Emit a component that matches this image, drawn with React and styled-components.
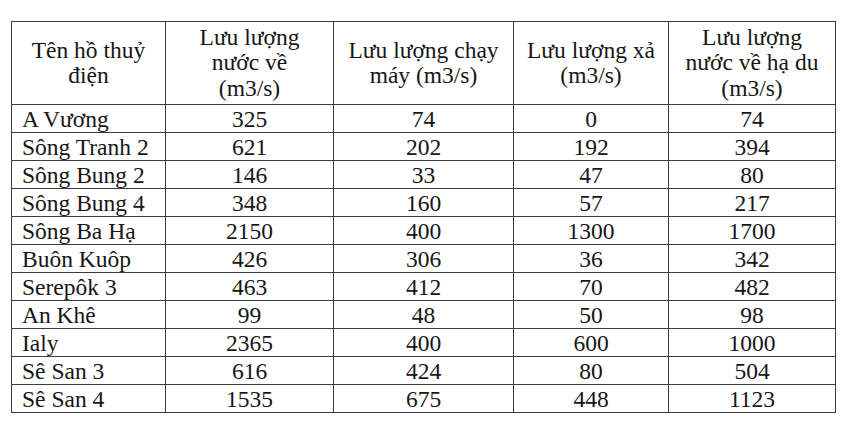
import React from 'react';
import styled, { createGlobalStyle } from 'styled-components';

const GlobalStyle = createGlobalStyle`
	html, body {
		margin: 0;
		padding: 0;
		background: #fff;
		font-family: "Liberation Serif", serif;
	}
`;

const Page = styled.div`
	padding: 21px 0 0 11px;
`;

const Table = styled.table`
	border-collapse: collapse;
	table-layout: fixed;
	width: 824px;
	font-family: "Liberation Serif", serif;
	font-size: 23.5px;
	color: #161616;
	border: 1px solid #3c3c3c;
`;

const HeadRow = styled.tr`
	height: 83px;
`;

const BodyRow = styled.tr`
	height: 28px;
`;

const HeadCell = styled.th`
	font-family: "Liberation Serif", serif;
	font-weight: normal;
	line-height: 25.5px;
	padding: 0 2px;
	text-align: center;
	vertical-align: middle;
	border: 1px solid #3c3c3c;
	white-space: nowrap;
`;

const Cell = styled.td`
	font-family: "Liberation Serif", serif;
	line-height: 26px;
	padding: 0;
	padding-left: ${(p) => (p.$left ? '10px' : '0')};
	text-align: ${(p) => (p.$left ? 'left' : 'center')};
	border: 1px solid #3c3c3c;
	white-space: nowrap;
`;

const headers = [
	['Tên hồ thuỷ', 'điện'],
	['Lưu lượng', 'nước về', '(m3/s)'],
	['Lưu lượng chạy', 'máy (m3/s)'],
	['Lưu lượng xả', '(m3/s)'],
	['Lưu lượng', 'nước về hạ du', '(m3/s)'],
];

const widths = [154, 168, 180, 155, 167];

const rows = [
	['A Vương', 325, 74, 0, 74],
	['Sông Tranh 2', 621, 202, 192, 394],
	['Sông Bung 2', 146, 33, 47, 80],
	['Sông Bung 4', 348, 160, 57, 217],
	['Sông Ba Hạ', 2150, 400, 1300, 1700],
	['Buôn Kuôp', 426, 306, 36, 342],
	['Serepôk 3', 463, 412, 70, 482],
	['An Khê', 99, 48, 50, 98],
	['Ialy', 2365, 400, 600, 1000],
	['Sê San 3', 616, 424, 80, 504],
	['Sê San 4', 1535, 675, 448, 1123],
];

const App = () => {
	return (
		<>
			<GlobalStyle />
			<Page>
				<Table>
					<colgroup>
						{widths.map((w, i) => <col key={i} style={{ width: w }} />)}
					</colgroup>
					<thead>
						<HeadRow>
							{headers.map((lines, i) => (
								<HeadCell key={i}>
									{lines.map((l, j) => (
										<React.Fragment key={j}>
											{j > 0 && <br />}
											{l}
										</React.Fragment>
									))}
								</HeadCell>
							))}
						</HeadRow>
					</thead>
					<tbody>
						{rows.map((r) => (
							<BodyRow key={r[0]}>
								{r.map((v, i) => (
									<Cell key={i} $left={i === 0}>{v}</Cell>
								))}
							</BodyRow>
						))}
					</tbody>
				</Table>
			</Page>
		</>
	);
};

export default App;
